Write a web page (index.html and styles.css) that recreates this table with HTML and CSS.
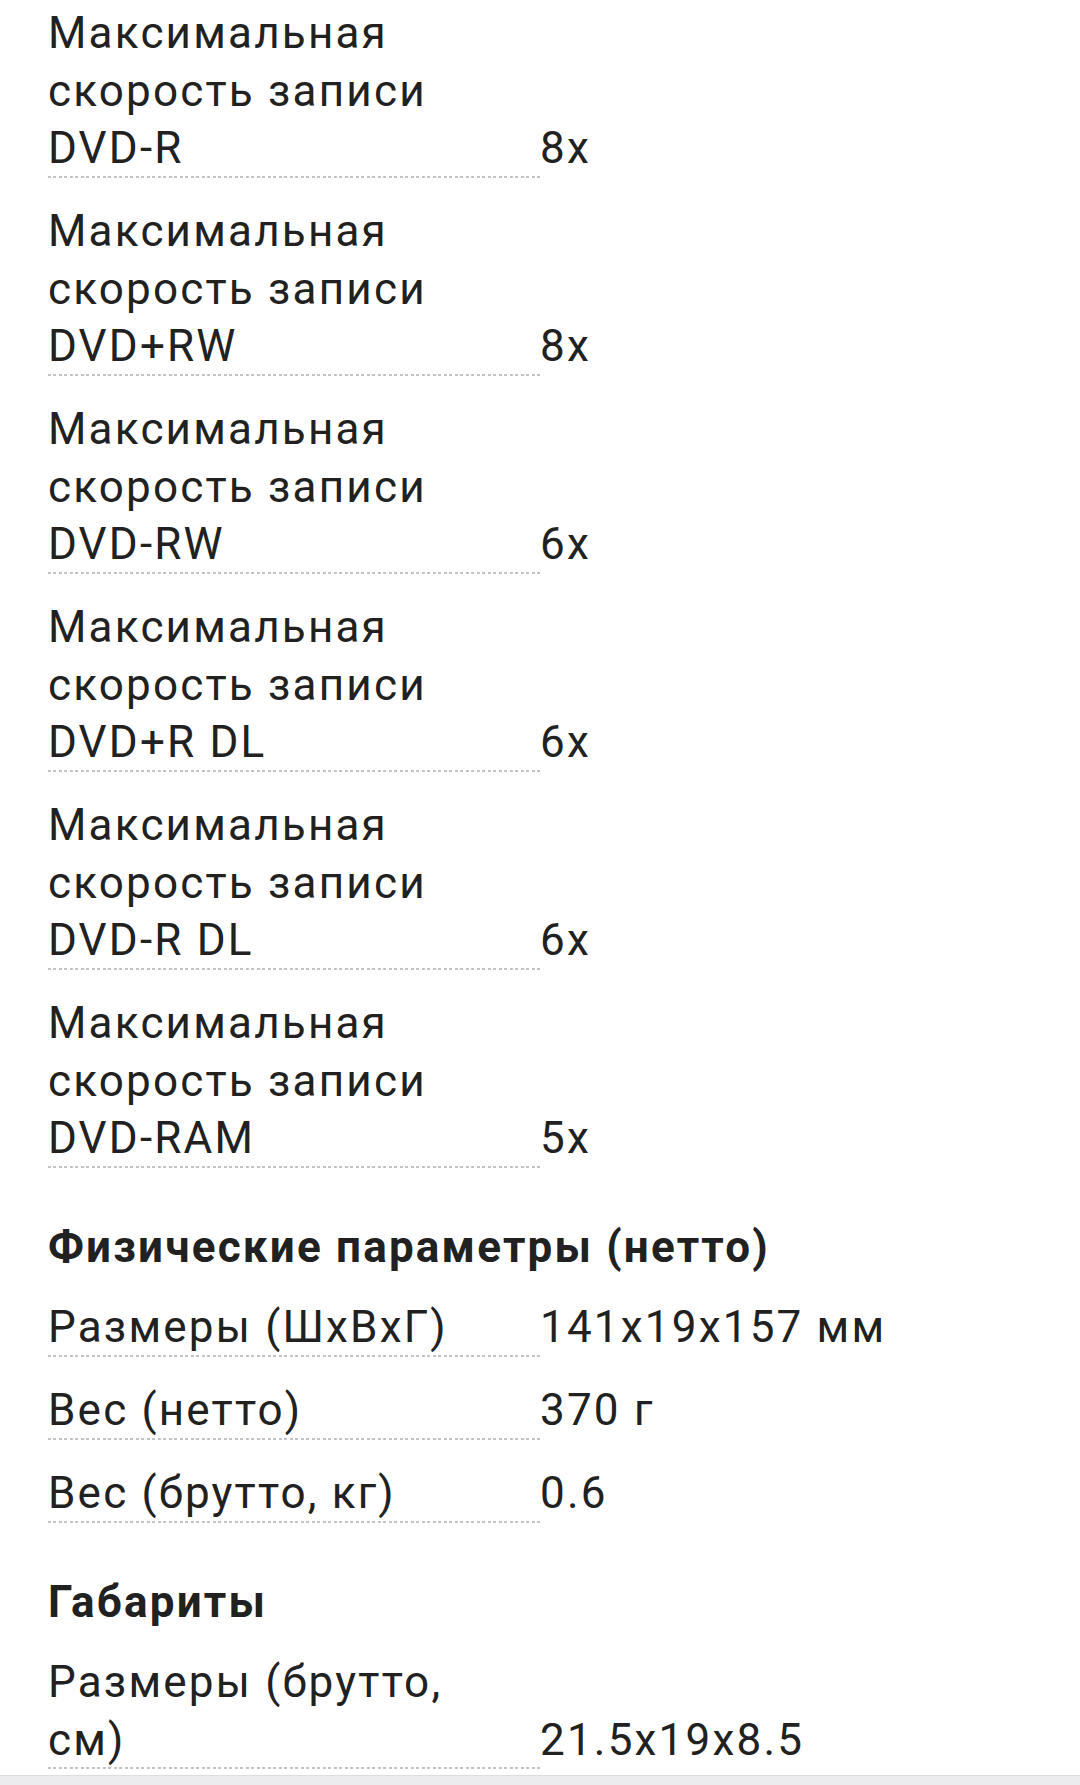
FILE: index.html
```html
<!DOCTYPE html>
<html lang="ru">
<head>
    <meta charset="UTF-8">
    <meta name="viewport" content="width=device-width, initial-scale=1.0">
    <title>Характеристики</title>
    <link rel="stylesheet" href="styles.css">
</head>
<body>
    <div class="specs">
        <div class="group">
            <div class="row">
                <div class="label">Максимальная скорость записи <span class="nowrap">DVD-R</span></div>
                <div class="value">8x</div>
            </div>
            <div class="row">
                <div class="label">Максимальная скорость записи <span class="nowrap">DVD+RW</span></div>
                <div class="value">8x</div>
            </div>
            <div class="row">
                <div class="label">Максимальная скорость записи <span class="nowrap">DVD-RW</span></div>
                <div class="value">6x</div>
            </div>
            <div class="row">
                <div class="label">Максимальная скорость записи <span class="nowrap">DVD+R DL</span></div>
                <div class="value">6x</div>
            </div>
            <div class="row">
                <div class="label">Максимальная скорость записи <span class="nowrap">DVD-R DL</span></div>
                <div class="value">6x</div>
            </div>
            <div class="row">
                <div class="label">Максимальная скорость записи <span class="nowrap">DVD-RAM</span></div>
                <div class="value">5x</div>
            </div>
        </div>

        <div class="group">
            <h3 class="group-title">Физические параметры (нетто)</h3>
            <div class="row">
                <div class="label">Размеры (ШхВхГ)</div>
                <div class="value">141x19x157 мм</div>
            </div>
            <div class="row">
                <div class="label">Вес (нетто)</div>
                <div class="value">370 г</div>
            </div>
            <div class="row">
                <div class="label">Вес (брутто, кг)</div>
                <div class="value">0.6</div>
            </div>
        </div>

        <div class="group">
            <h3 class="group-title">Габариты</h3>
            <div class="row">
                <div class="label">Размеры (брутто, см)</div>
                <div class="value">21.5x19x8.5</div>
            </div>
        </div>
    </div>
    <div class="bottom-bar"></div>
</body>
</html>
```

FILE: styles.css
```css
html, body {
    margin: 0;
    padding: 0;
    background-color: #fff;
}
body {
    font-family: Roboto, "Noto Sans", Arial, sans-serif;
    color: #212121;
    letter-spacing: 2.2px;
    height: 1785px;
    overflow: hidden;
    display: flex;
    flex-direction: column;
}
.specs {
    flex: 1;
    margin-top: -20.5px;
    padding: 0 48px;
}
.group + .group {
    margin-top: 52px;
}
.group-title {
    margin: 0;
    font-size: 44px;
    font-weight: 700;
    line-height: 54px;
}
.row {
    display: flex;
    align-items: flex-end;
    padding-top: 25.5px;
    font-size: 44px;
    line-height: 57.5px;
}
.label {
    width: 432px;
    padding-right: 60px;
    flex-shrink: 0;
    /* dotted leader under the name */
    background-image: repeating-linear-gradient(to right, #c4c4c4 0 2.75px, transparent 2.75px 5.5px);
    background-size: 100% 2px;
    background-position: left bottom;
    background-repeat: no-repeat;
}
.nowrap {
    white-space: nowrap;
}
.value {
    white-space: nowrap;
}
.bottom-bar {
    height: 9px;
    background-color: #ececee;
    border-top: 1px solid #dedede;
}
```
